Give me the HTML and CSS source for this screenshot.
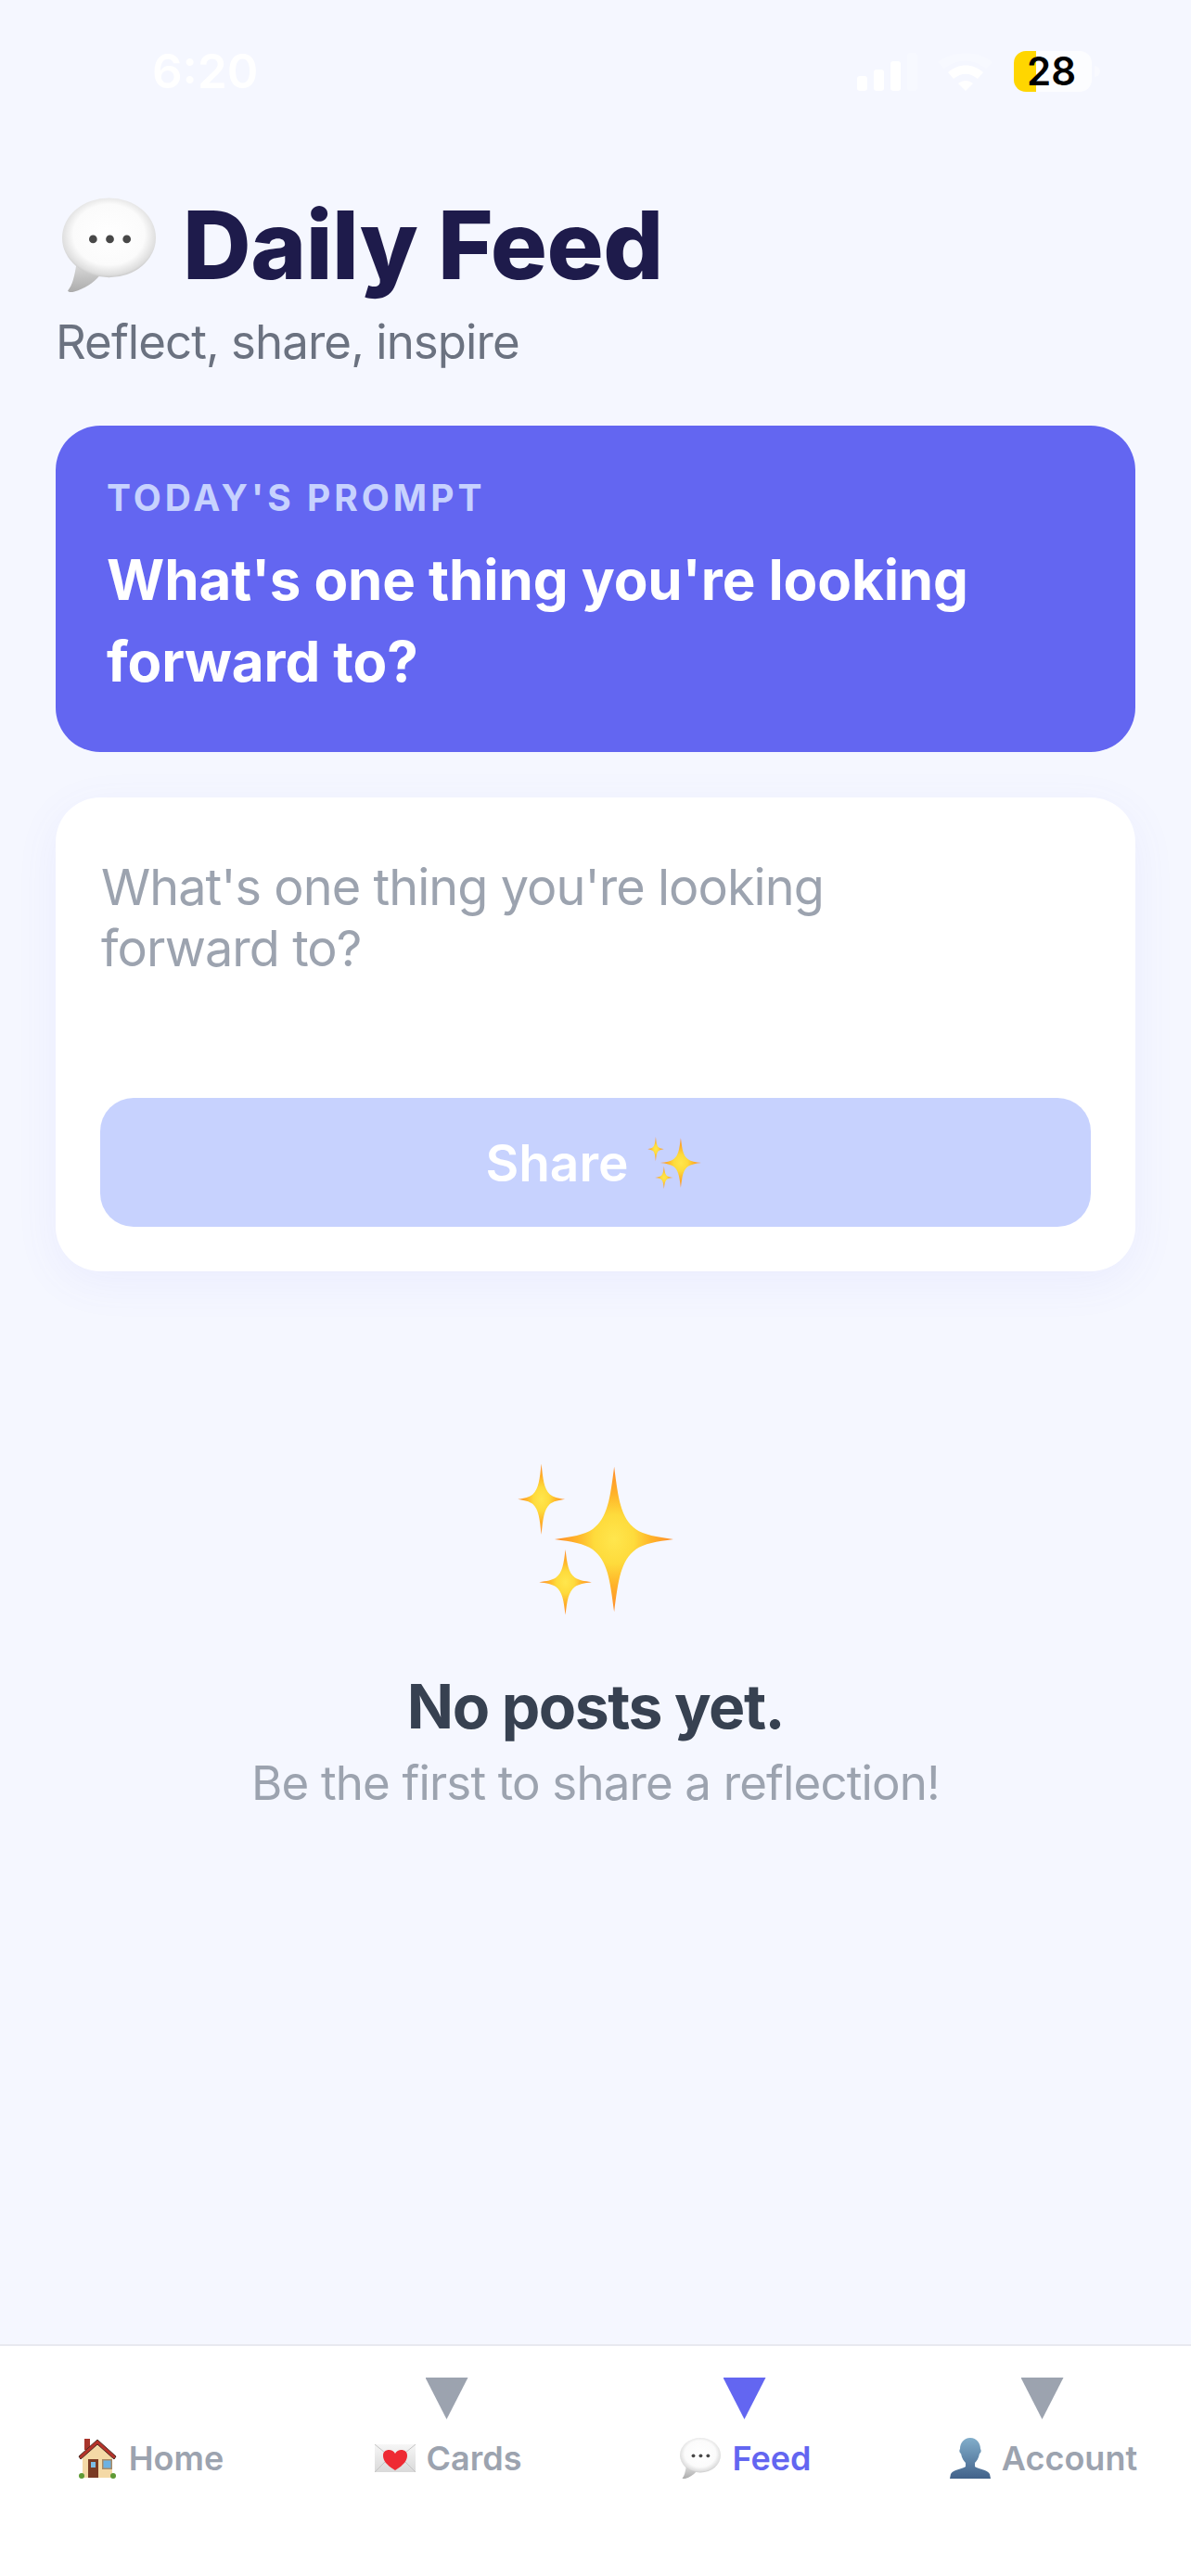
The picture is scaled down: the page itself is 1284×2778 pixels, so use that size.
FILE: index.html
```html
<!DOCTYPE html>
<html lang="en">
<head>
    <meta charset="UTF-8" />
    <meta name="viewport" content="width=device-width, initial-scale=1.0" />
    <title>Daily Feed</title>
    <link rel="stylesheet" href="styles.css">
</head>
<body>
    <!-- shared drawings for the emoji-style icons -->
    <svg class="icon-defs" aria-hidden="true">
        <defs>
            <radialGradient id="bubble-fill" cx="50%" cy="46%" r="56%">
                <stop offset="0%" stop-color="#ffffff"/>
                <stop offset="68%" stop-color="#fbfbfb"/>
                <stop offset="90%" stop-color="#dedede"/>
                <stop offset="100%" stop-color="#bcbcbc"/>
            </radialGradient>
            <linearGradient id="tail-fill" x1="0" y1="0" x2="0" y2="1">
                <stop offset="0%" stop-color="#d8d8d8"/>
                <stop offset="100%" stop-color="#ababab"/>
            </linearGradient>
            <radialGradient id="star-fill" cx="50%" cy="50%" r="50%">
                <stop offset="0%" stop-color="#ffe64d"/>
                <stop offset="34%" stop-color="#fedb3c"/>
                <stop offset="62%" stop-color="#ffb429"/>
                <stop offset="100%" stop-color="#ff8a2b"/>
            </radialGradient>
            <linearGradient id="bust-fill" x1="0" y1="0" x2="0" y2="1">
                <stop offset="0%" stop-color="#82aecb"/>
                <stop offset="100%" stop-color="#42628a"/>
            </linearGradient>
            <linearGradient id="letter-fill" x1="0" y1="0" x2="0" y2="1">
                <stop offset="0%" stop-color="#f6f6f6"/>
                <stop offset="100%" stop-color="#d9d9d9"/>
            </linearGradient>
            <symbol id="bubble" viewBox="0 0 100 100">
                <path d="M15 72 C13 84 11 93 6 99 C7 101 10 101 13 100 C24 97 33 91 40 83Z" fill="url(#tail-fill)"/>
                <ellipse cx="50" cy="42.500" rx="50" ry="42.500" fill="url(#bubble-fill)"/>
                <circle cx="33" cy="44" r="4.300" fill="#484848"/>
                <circle cx="51" cy="44" r="4.300" fill="#484848"/>
                <circle cx="69" cy="44" r="4.300" fill="#484848"/>
            </symbol>
            <path id="star" d="M0 -100 C7 -55 11 -30 36 -14 C50 -6 72 -3 100 0 C72 3 50 6 36 14 C11 30 7 55 0 100 C-7 55 -11 30 -36 14 C-50 6 -72 3 -100 0 C-72 -3 -50 -6 -36 -14 C-11 -30 -7 -55 0 -100Z" fill="url(#star-fill)"/>
            <symbol id="sparkles" viewBox="0 0 505 490">
                <use href="#star" transform="translate(313 245) scale(1.930 2.350)"/>
                <use href="#star" transform="translate(77 115) scale(.765 1.150)"/>
                <use href="#star" transform="translate(155 384) scale(.850 1.060)"/>
            </symbol>
        </defs>
    </svg>

    <div class="status-bar">
        <span class="status-time">6:20</span>
        <div class="status-icons">
            <svg class="signal" viewBox="0 0 65 41" aria-hidden="true">
                <rect x="0" y="25" width="11" height="16" rx="3" fill="#fff"/>
                <rect x="18" y="18" width="11" height="23" rx="3" fill="#fff"/>
                <rect x="36" y="9" width="11" height="32" rx="3" fill="#fff"/>
                <rect x="54" y="0" width="11" height="41" rx="3" fill="#fff" opacity=".25"/>
            </svg>
            <svg class="wifi" viewBox="0 0 60 41" aria-hidden="true">
                <path d="M0 10 C16 -3 44 -3 59 10 L52 17 C38 6 21 6 7 17Z" fill="#fff" opacity=".25"/>
                <path d="M11 21 C22 11 38 11 49 21 L43 28 C34 21 26 21 17 28Z" fill="#fff"/>
                <path d="M22 33 C27 29 33 29 38 33 L30 41Z" fill="#fff"/>
            </svg>
            <div class="battery">
                <div class="battery-body">28</div>
                <div class="battery-nub"></div>
            </div>
        </div>
    </div>

    <main class="page">
        <header class="page-header">
            <h1 class="page-title">
                <svg class="title-icon" aria-hidden="true"><use href="#bubble"/></svg>
                <span>Daily Feed</span>
            </h1>
            <p class="page-subtitle">Reflect, share, inspire</p>
        </header>

        <section class="prompt-card">
            <div class="prompt-label">TODAY'S PROMPT</div>
            <div class="prompt-text">What's one thing you're looking<br>forward to?</div>
        </section>

        <section class="compose-card">
            <div class="compose-input">What's one thing you're looking<br>forward to?</div>
            <button class="share-button">
                <span>Share</span>
                <svg class="share-icon" aria-hidden="true"><use href="#sparkles"/></svg>
            </button>
        </section>

        <section class="empty-state">
            <svg class="empty-icon" aria-hidden="true"><use href="#sparkles"/></svg>
            <h2 class="empty-title">No posts yet.</h2>
            <p class="empty-text">Be the first to share a reflection!</p>
        </section>
    </main>

    <nav class="tab-bar">
        <a class="tab">
            <span class="tab-label">
                <svg class="tab-icon" viewBox="0 0 44 44" aria-hidden="true">
                    <rect x="8" y="1" width="6" height="12" fill="#a8352c"/>
                    <path d="M6 19 L22 5 L38 19 V43 H6Z" fill="#f4d9a6"/>
                    <path d="M2 20 L22 2 L42 20 L40 23 L22 7 L4 23Z" fill="#b5322a" stroke="#4a2a22" stroke-width="1"/>
                    <rect x="12" y="23" width="11" height="20" fill="#7a3b24"/>
                    <rect x="15" y="26" width="5" height="6" fill="#7cbde6"/>
                    <rect x="27" y="23" width="11" height="11" fill="#a98a64"/>
                    <rect x="28.500" y="24.500" width="8" height="8" fill="#6cb1e2"/>
                    <circle cx="5" cy="41" r="3" fill="#5f9a35"/>
                    <circle cx="39" cy="41" r="3" fill="#5f9a35"/>
                </svg>
                <span>Home</span>
            </span>
        </a>
        <a class="tab">
            <span class="tab-arrow"></span>
            <span class="tab-label">
                <svg class="tab-icon" viewBox="0 0 44 44" aria-hidden="true">
                    <rect x="0" y="7" width="44" height="30" fill="url(#letter-fill)"/>
                    <path d="M0 7 L22 25 L44 7 M0 37 L16 21 M44 37 L28 21" fill="none" stroke="#c4c4c4" stroke-width="1"/>
                    <path d="M22 35 C12 29 9 24 9 19 C9 12 19 11 22 17 C25 11 35 12 35 19 C35 24 32 29 22 35Z" fill="#ee2a33"/>
                </svg>
                <span>Cards</span>
            </span>
        </a>
        <a class="tab tab-active">
            <span class="tab-arrow"></span>
            <span class="tab-label">
                <svg class="tab-icon" aria-hidden="true"><use href="#bubble"/></svg>
                <span>Feed</span>
            </span>
        </a>
        <a class="tab">
            <span class="tab-arrow"></span>
            <span class="tab-label">
                <svg class="tab-icon" viewBox="0 0 44 44" aria-hidden="true">
                    <path d="M22 0 C29 0 33 6 33 12 C34 13 34 16 32 17 C31 22 29 25 27 27 L27 31 C31 34 40 34 43 39 L44 44 H0 L1 39 C4 34 13 34 17 31 L17 27 C15 25 13 22 12 17 C10 16 10 13 11 12 C11 6 15 0 22 0Z" fill="url(#bust-fill)"/>
                </svg>
                <span>Account</span>
            </span>
        </a>
    </nav>
</body>
</html>
```

FILE: styles.css
```css
* {
    box-sizing: border-box;
}

body {
    display: flex;
    flex-direction: column;
    width: 1284px;
    height: 2778px;
    margin: 0;
    font-family: Inter, "Liberation Sans", sans-serif;
    background: #f5f7ff;
    overflow: hidden;
}

.icon-defs {
    display: block;
    width: 0;
    height: 0;
}

/* status bar */
.status-bar {
    display: flex;
    justify-content: space-between;
    align-items: center;
    height: 140px;
    padding: 12px 98px 0 164px;
}

.status-time {
    font-size: 51px;
    font-weight: 600;
    color: #fff;
}

.status-icons {
    display: flex;
    align-items: flex-end;
}

.signal {
    width: 65px;
    height: 41px;
    margin-right: 22px;
}

.wifi {
    width: 60px;
    height: 41px;
    margin-right: 22px;
}

.battery {
    display: flex;
    align-items: center;
    height: 44px;
    margin-bottom: -1px;
}

.battery-body {
    width: 84px;
    height: 44px;
    padding-left: 14px;
    border-radius: 13px;
    background: linear-gradient(to right, #ffd600 24px, rgba(255, 255, 255, 0.75) 24px);
    color: #000;
    font-size: 42px;
    font-weight: 600;
    line-height: 44px;
}

.battery-nub {
    width: 6px;
    height: 12px;
    margin-left: 3px;
    border-radius: 0 6px 6px 0;
    background: rgba(255, 255, 255, 0.4);
}

/* page */
.page {
    flex: 1;
    padding: 64px 60px 0;
}

.page-title {
    display: flex;
    align-items: center;
    height: 120px;
    margin: 0;
    font-size: 102px;
    font-weight: 800;
    line-height: 120px;
    letter-spacing: -0.500px;
    color: #1e1b4b;
}

.title-icon {
    flex: none;
    width: 101px;
    height: 102px;
    margin: 0 29px 0 7px;
}

.page-subtitle {
    margin: 14px 0 0;
    font-size: 51px;
    line-height: 62px;
    letter-spacing: -0.950px;
    color: #6b7280;
}

.prompt-card {
    margin-top: 59px;
    padding: 54px 55px;
    border-radius: 48px;
    background: #6366f1;
    color: #fff;
}

.prompt-label {
    font-size: 39px;
    font-weight: 700;
    line-height: 48px;
    letter-spacing: 4px;
    color: #c7d2fe;
}

.prompt-text {
    margin-top: 20px;
    font-size: 60px;
    font-weight: 700;
    line-height: 88px;
    letter-spacing: -0.100px;
}

.compose-card {
    margin-top: 49px;
    padding: 48px;
    border-radius: 48px;
    background: #fff;
    box-shadow: 0 12px 48px rgba(99, 102, 241, 0.07);
}

.compose-input {
    height: 276px;
    padding: 16px 1px 0;
    font-size: 54px;
    line-height: 66px;
    letter-spacing: -0.950px;
    color: #9ca3af;
}

.share-button {
    display: flex;
    justify-content: center;
    align-items: center;
    gap: 20px;
    width: 100%;
    height: 139px;
    padding: 0 5px 0 0;
    border: none;
    border-radius: 36px;
    background: #c7d2fe;
    color: #fff;
    font-family: inherit;
    font-size: 55px;
    font-weight: 600;
}

.share-icon {
    width: 58px;
    height: 56px;
}

.empty-state {
    display: flex;
    flex-direction: column;
    align-items: center;
    margin-top: 207px;
    text-align: center;
}

.empty-icon {
    width: 168px;
    height: 164px;
}

.empty-title {
    margin: 58px 0 0;
    font-size: 66px;
    font-weight: 700;
    line-height: 80px;
    letter-spacing: -1.500px;
    color: #374151;
}

.empty-text {
    margin: 12px 0 0;
    font-size: 51px;
    line-height: 62px;
    letter-spacing: -0.850px;
    color: #9ca3af;
}

/* tab bar */
.tab-bar {
    display: grid;
    grid-template-columns: repeat(4, 1fr);
    grid-auto-rows: 109px;
    height: 250px;
    padding-top: 34px;
    border-top: 2px solid #e8e9f0;
    background: #fff;
}

.tab {
    display: flex;
    flex-direction: column;
    justify-content: flex-end;
    align-items: center;
    color: #9ca3af;
}

.tab-active {
    color: #6366f1;
}

.tab-arrow {
    width: 46px;
    height: 45px;
    margin-bottom: 20px;
    background: currentColor;
    clip-path: polygon(0 0, 100% 0, 50% 100%);
}

.tab-label {
    display: flex;
    align-items: center;
    gap: 12px;
    height: 44px;
    padding-left: 3px;
    font-size: 36px;
    font-weight: 600;
    line-height: 44px;
}

.tab-icon {
    width: 44px;
    height: 44px;
}
```
